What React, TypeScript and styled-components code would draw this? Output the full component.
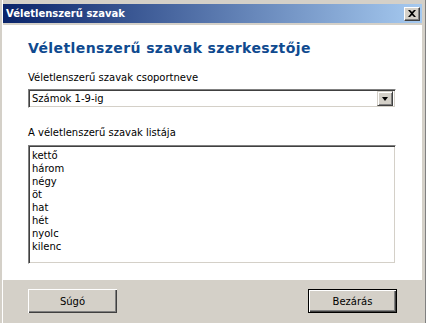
import styled, {createGlobalStyle} from 'styled-components';

const GlobalStyle = createGlobalStyle`
  html, body {
    margin: 0;
    padding: 0;
    background: #d4d0c8;
    overflow: hidden;
  }
  body {
    font-family: "DejaVu Sans", Verdana, sans-serif;
  }
`;

const Frame = styled.div`
  width: 426px;
  height: 323px;
  box-sizing: border-box;
  display: flex;
  flex-direction: column;
  background: #d4d0c8;
  padding: 4px 3px 0 3px;
  border-right: 1px solid #808080;
  box-shadow: inset 2px 0 0 #d4d0c8, inset 3px 0 0 #ffffff;
`;

const TitleBar = styled.div`
  height: 19px;
  display: flex;
  align-items: center;
  justify-content: space-between;
  padding: 0 2px 0 3px;
  background: linear-gradient(to right, #0a246a, #a6caf0);
  color: #fff;
  font-weight: bold;
  font-size: 10px;
  flex-shrink: 0;
`;

const CloseButton = styled.div`
  width: 16px;
  height: 14px;
  box-sizing: border-box;
  background: #d4d0c8;
  border-top: 1px solid #fff;
  border-left: 1px solid #fff;
  border-right: 1px solid #404040;
  border-bottom: 1px solid #404040;
  box-shadow: inset -1px -1px 0 #808080;
  display: flex;
  align-items: center;
  justify-content: center;
`;

const Body = styled.div`
  margin-top: 2px;
  background: #fff;
  padding: 13px 26px 16px 25px;
  display: flex;
  flex-direction: column;
  flex-shrink: 0;
`;

const Heading = styled.h1`
  margin: 0;
  font-size: 14px;
  line-height: 20px;
  font-weight: bold;
  color: #0f4a8f;
  letter-spacing: 0.4px;
`;

const Label = styled.div<{$gap: number}>`
  margin-top: ${p => p.$gap}px;
  font-size: 10px;
  line-height: 14px;
  color: #000;
`;

const Sunken = styled.div`
  box-sizing: border-box;
  border-top: 1px solid #808080;
  border-left: 1px solid #808080;
  border-right: 1px solid #fff;
  border-bottom: 1px solid #fff;
  background: #fff;
`;

const Select = styled(Sunken)`
  margin-top: 4px;
  height: 19px;
  display: flex;
  align-items: center;
  box-shadow: inset 1px 1px 0 #404040, inset -1px -1px 0 #d4d0c8;
  padding: 0 2px 0 3px;
  font-size: 10px;
`;

const SelectValue = styled.span`
  flex: 1;
`;

const DropButton = styled.div`
  width: 16px;
  height: 15px;
  box-sizing: border-box;
  background: #d4d0c8;
  border-top: 1px solid #d4d0c8;
  border-left: 1px solid #d4d0c8;
  border-right: 1px solid #404040;
  border-bottom: 1px solid #404040;
  box-shadow: inset 1px 1px 0 #fff, inset -1px -1px 0 #808080;
  display: flex;
  align-items: center;
  justify-content: center;
`;

const Arrow = styled.div`
  width: 0;
  height: 0;
  border-left: 3.5px solid transparent;
  border-right: 3.5px solid transparent;
  border-top: 4px solid #000;
`;

const ListBox = styled(Sunken)`
  margin-top: 5px;
  height: 119px;
  box-shadow: inset 1px 1px 0 #404040, inset -1px -1px 0 #d4d0c8;
  padding: 3px 3px;
  font-size: 10px;
  line-height: 13px;
`;

const Footer = styled.div`
  flex: 1;
  display: flex;
  justify-content: space-between;
  align-items: flex-start;
  padding: 9px 25px 0 25px;
`;

const Button = styled.button<{$default?: boolean}>`
  width: 89px;
  height: 24px;
  box-sizing: border-box;
  background: #d4d0c8;
  font-family: "DejaVu Sans", Verdana, sans-serif;
  font-size: 10px;
  color: #000;
  padding: 0;
  border: none;
  box-shadow: ${p =>
    p.$default
      ? 'inset 0 0 0 1px #000, inset 2px 2px 0 #fff, inset -2px -2px 0 #404040, inset -3px -3px 0 #808080'
      : 'inset 1px 1px 0 #fff, inset -1px -1px 0 #404040, inset -2px -2px 0 #808080'};
`;

const words = ['kettő', 'három', 'négy', 'öt', 'hat', 'hét', 'nyolc', 'kilenc'];

function App() {
  return (
    <>
      <GlobalStyle />
      <Frame>
        <TitleBar>
          <span>Véletlenszerű szavak</span>
          <CloseButton>
            <svg width="8" height="7" viewBox="0 0 8 7">
              <path d="M0 0h2l2 2 2-2h2L5 3.5 8 7H6L4 5 2 7H0l3-3.5z" fill="#000" />
            </svg>
          </CloseButton>
        </TitleBar>
        <Body>
          <Heading>Véletlenszerű szavak szerkesztője</Heading>
          <Label $gap={13}>Véletlenszerű szavak csoportneve</Label>
          <Select>
            <SelectValue>Számok 1-9-ig</SelectValue>
            <DropButton>
              <Arrow />
            </DropButton>
          </Select>
          <Label $gap={18}>A véletlenszerű szavak listája</Label>
          <ListBox>
            {words.map(w => (
              <div key={w}>{w}</div>
            ))}
          </ListBox>
        </Body>
        <Footer>
          <Button>Súgó</Button>
          <Button $default>Bezárás</Button>
        </Footer>
      </Frame>
    </>
  );
}

export default App;
